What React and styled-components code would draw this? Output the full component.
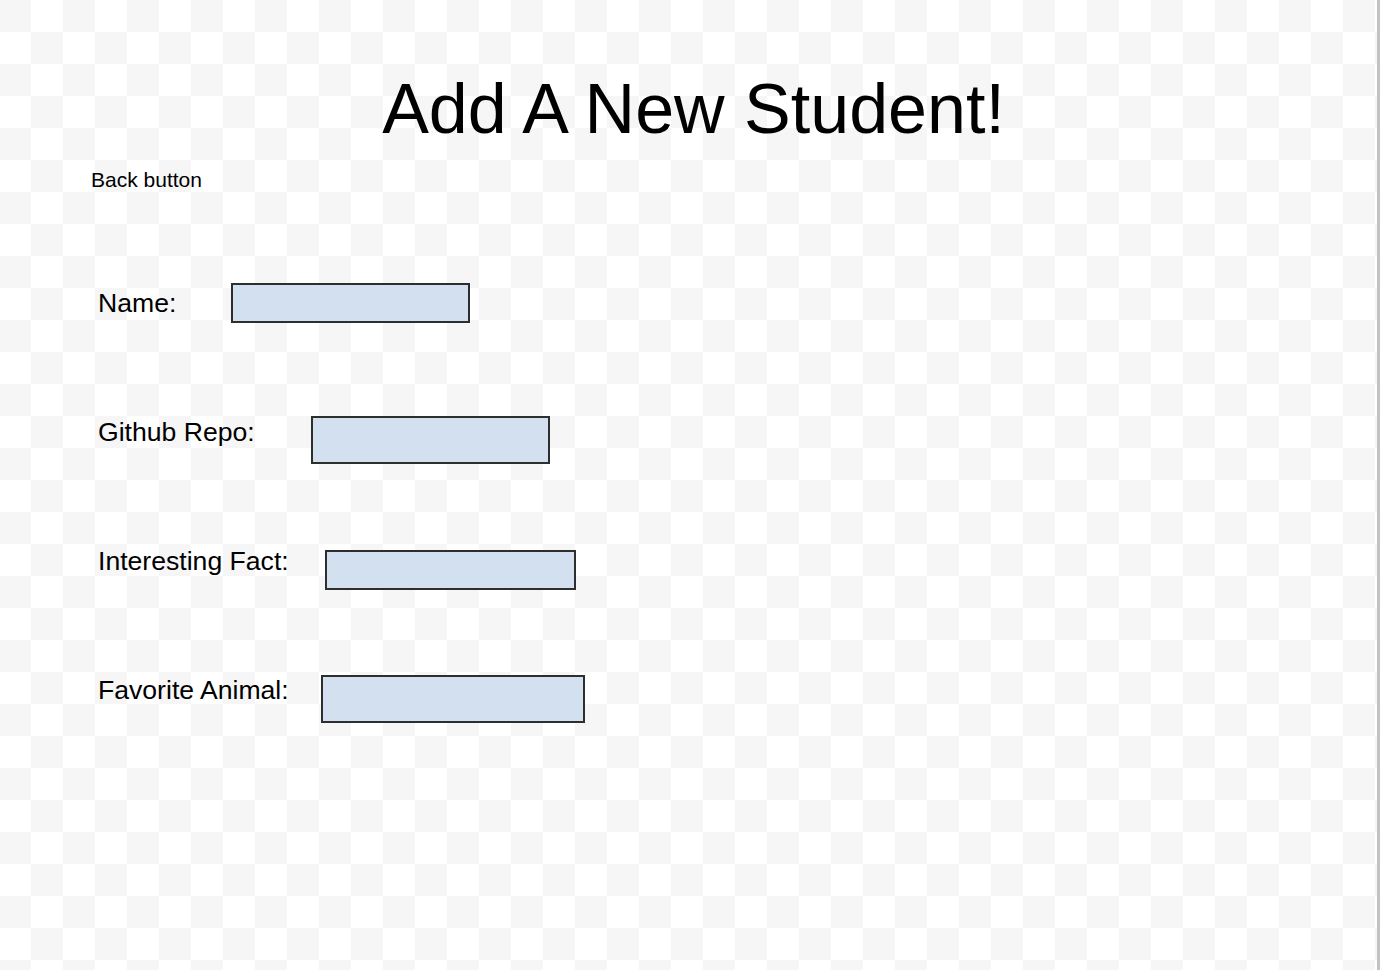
import React from 'react'
import styled, { createGlobalStyle } from 'styled-components'

const GlobalStyle = createGlobalStyle`
  html, body {
    margin: 0;
    padding: 0;
  }
  body {
    font-family: 'Liberation Sans', Arial, sans-serif;
    color: #000;
    background-color: #fff;
    /* transparent-canvas checkerboard */
    background-image: conic-gradient(
      transparent 25%, #f6f6f6 0 50%, transparent 0 75%, #f6f6f6 0
    );
    background-size: 64px 64px;
    background-position: -1px 0;
  }
`

const Page = styled.div`
  box-sizing: border-box;
  width: 100%;
  min-height: 100vh;
  border-right: 3px solid #c2c2c2;
  padding-top: 74px;
`

const Title = styled.h1`
  margin: 0;
  padding-left: 10px;
  text-align: center;
  font-size: 70px;
  line-height: 70px;
  font-weight: 400;
`

const BackButton = styled.div`
  margin: 24px 0 0 91px;
  font-size: 21px;
  line-height: 24px;
  cursor: pointer;
`

const Form = styled.div`
  display: grid;
  grid-auto-rows: 129px;
  margin-top: 96px;
  padding-left: 98px;
`

const Row = styled.div`
  display: flex;
  align-items: flex-start;
`

const Label = styled.label`
  flex: 0 0 ${p => p.$w}px;
  font-size: 26.6px;
  line-height: 30px;
`

const Field = styled.div`
  box-sizing: border-box;
  width: ${p => p.$w}px;
  height: ${p => p.$h}px;
  margin-top: ${p => p.$top}px;
  background: #d3e0f0;
  border: 2px solid #2e2e2e;
`

const fields = [
  { label: 'Name:', labelW: 133, w: 239, h: 40, top: -5 },
  { label: 'Github Repo:', labelW: 213, w: 239, h: 48, top: -1 },
  { label: 'Interesting Fact:', labelW: 227, w: 251, h: 40, top: 4 },
  { label: 'Favorite Animal:', labelW: 223, w: 264, h: 48, top: 0 },
]

export default function App() {
  return (
    <Page>
      <GlobalStyle />
      <Title>Add A New Student!</Title>
      <BackButton onClick={() => { window.history.back() }}>Back button</BackButton>
      <Form>
        {fields.map(f => (
          <Row key={f.label}>
            <Label $w={f.labelW}>{f.label}</Label>
            <Field $w={f.w} $h={f.h} $top={f.top} />
          </Row>
        ))}
      </Form>
    </Page>
  )
}
